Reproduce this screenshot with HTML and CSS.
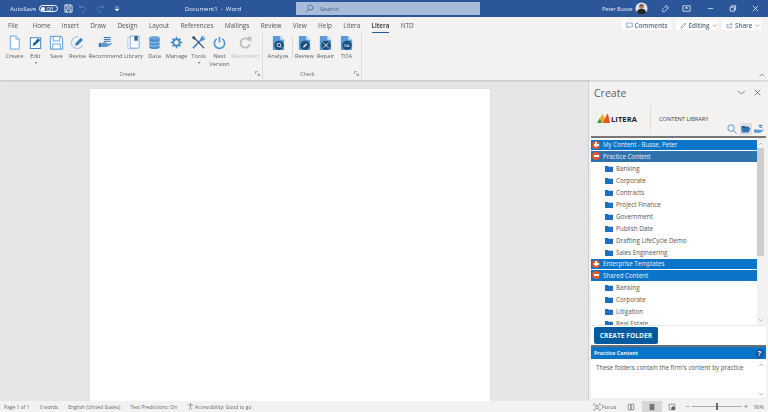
FILE: index.html
```html
<!DOCTYPE html>
<html lang="en">
<head>
<meta charset="utf-8">
<title>Document1 - Word</title>
<link rel="stylesheet" href="styles.css">
</head>
<body>
<div class="app">
  <header class="titlebar">
    <div class="tb-left">
      <span class="autosave">AutoSave</span>
      <span class="toggle"><i></i><b>Off</b></span>
      <svg class="qa save" viewBox="0 0 10 10"><path d="M1 1h7l1 1v7H1zM3 1v2.500h4V1M3 9V5.500h4V9" fill="none" stroke="#fff" stroke-width=".9"/></svg>
      <svg class="qa undo" viewBox="0 0 10 10"><path d="M2 1v3h3M2.300 4A3.300 3.300 0 1 1 4 9" fill="none" stroke="#5f82b8" stroke-width=".9"/></svg>
      <svg class="qa redo" viewBox="0 0 10 10"><path d="M8 1v3H5M7.700 4A3.300 3.300 0 1 0 6 9" fill="none" stroke="#5f82b8" stroke-width=".9"/></svg>
      <svg class="qa more" viewBox="0 0 6 6"><path d="M1 1h4M1 3l2 2 2-2z" fill="#fff" stroke="#fff" stroke-width=".5"/></svg>
      <span class="doctitle">Document1 &nbsp;-&nbsp; Word</span>
    </div>
    <div class="search">
      <svg viewBox="0 0 10 10"><circle cx="6" cy="4" r="2.800" fill="none" stroke="#3f5f90" stroke-width=".8"/><path d="M4 6L1 9" stroke="#3f5f90" stroke-width=".8"/></svg>
      <span>Search</span>
    </div>
    <div class="tb-right">
      <span class="user">Peter Busse</span>
      <svg class="avatar" viewBox="0 0 14 14"><circle cx="7" cy="7" r="6.500" fill="#dfe3e8"/><circle cx="7" cy="5" r="2.600" fill="#a9806a"/><path d="M4.400 4.600C5 2 9 2 9.600 4.600 8 3.600 6 3.600 4.400 4.600z" fill="#3a2c28"/><path d="M1.800 11c1-3 3-3.400 5.200-3.400S11.200 8 12.200 11a6.500 6.500 0 0 1-10.400 0z" fill="#23262c"/></svg>
      <svg class="win pen" viewBox="0 0 10 10"><path d="M2 8.500L1.500 6 6 1.500 8.500 4 4 8.500zM5 2.500L7.500 5" fill="none" stroke="#fff" stroke-width=".7"/></svg>
      <svg class="win ribbonopt" viewBox="0 0 10 10"><path d="M1 2h8v6H1z" fill="none" stroke="#fff" stroke-width=".8"/><path d="M3 5h4L5 3z" fill="#fff"/></svg>
      <svg class="win min" viewBox="0 0 10 10"><path d="M2 5h6" stroke="#fff" stroke-width=".7"/></svg>
      <svg class="win restore" viewBox="0 0 10 10"><path d="M2.500 3.500h4.500v4.500H2.500zM4 3.500V2h4.500v4.500H7" fill="none" stroke="#fff" stroke-width=".8"/></svg>
      <svg class="win close" viewBox="0 0 10 10"><path d="M2 2l6 6M8 2l-6 6" stroke="#fff" stroke-width=".8"/></svg>
    </div>
  </header>

  <section class="ribbon">
    <div class="tabrow">
      <nav class="tabs">
        <span class="t-file">File</span><span>Home</span><span>Insert</span><span>Draw</span><span>Design</span><span>Layout</span><span>References</span><span>Mailings</span><span>Review</span><span>View</span><span>Help</span><span>Litera</span><span class="active">Litera</span><span>NTD</span>
      </nav>
      <div class="actions">
        <span class="act a-comments"><svg viewBox="0 0 10 10"><path d="M1 1.500h8v5.500H4L2.500 8.500V7H1z" fill="none" stroke="#2b579a" stroke-width=".7"/></svg>Comments</span>
        <span class="act a-editing"><svg viewBox="0 0 10 10"><path d="M1.500 8.500L2 6.500 7 1.500 8.500 3 3.500 8z" fill="none" stroke="#2b579a" stroke-width=".7"/></svg>Editing<svg class="caret" viewBox="0 0 6 6"><path d="M1 2l2 2 2-2" fill="none" stroke="#605e5c" stroke-width=".7"/></svg></span>
        <span class="act a-share"><svg viewBox="0 0 10 10"><path d="M1.500 3.500h2M1.500 3.500v5h6.500V6M4 6.500C4 4 6 3 8.500 3M7 1.200L8.800 3 7 4.800" fill="none" stroke="#2b579a" stroke-width=".7"/></svg>Share<svg class="caret" viewBox="0 0 6 6"><path d="M1 2l2 2 2-2" fill="none" stroke="#605e5c" stroke-width=".7"/></svg></span>
      </div>
    </div>
    <div class="commands">
      <div class="group g-create">
        <div class="btns">
          <div class="cmd w21"><svg viewBox="0 0 14 16"><path d="M2.500 1h6L12 4.500V15H2.500z" fill="#fff" stroke="#74ace0" stroke-width="1.100"/><path d="M8.500 1v3.500H12" fill="#e4eff9" stroke="#74ace0" stroke-width=".9"/></svg><span>Create</span></div>
          <div class="cmd w21"><svg viewBox="0 0 14 16"><path d="M1.500 3h11v11.500h-11z" fill="#fff" stroke="#3f88c9" stroke-width="1.100"/><path d="M4 11.500l.6-2.500L10 3.500l2 2L6.500 11z" fill="#1f5a8f"/></svg><span>Edit</span><svg class="drop" viewBox="0 0 6 4"><path d="M1.500 1h3L3 3z" fill="#8a8a8a"/></svg></div>
          <div class="cmd w21"><svg viewBox="0 0 15 16"><path d="M1 1.500h11l2 2v11.500H1z" fill="#fff" stroke="#6aa6dd" stroke-width="1.200"/><path d="M4 1.500v5h7v-5M3.500 15V9.500h8V15" fill="none" stroke="#6aa6dd" stroke-width="1.100"/></svg><span>Save</span></div>
          <div class="cmd w21"><svg viewBox="0 0 15 16"><path d="M13 11A6.300 6.300 0 1 1 8.500 2" fill="none" stroke="#a9cbe9" stroke-width="1.400"/><path d="M4.800 11.500l.7-3L11 3l2.300 2.300L7.800 10.800z" fill="#3f7fb8"/></svg><span>Revise</span></div>
          <div class="cmd w35"><svg viewBox="0 0 18 16"><path d="M1 8.500h3v5H1z" fill="#2e75b6"/><path d="M4 9c3-2 5-1 7-.500 1.500.3 1 1.500-.500 1.500H8c3 .500 5-.500 7-1.500 1.500-.500 2 .7 1 1.500-2.500 2-5 3.500-8 3.500H4z" fill="#5b9bd5"/><path d="M7 2h8M7 4.300h8M7 6.500h8" stroke="#2f6fa9" stroke-width="1.200"/></svg><span>Recommend</span></div>
          <div class="cmd w21"><svg viewBox="0 0 15 16"><path d="M1.500 2.500h9v12h-9z" fill="#fff" stroke="#a9cbe9" stroke-width="1"/><path d="M4 1h9.500v13H4z" fill="#fff" stroke="#74ace0" stroke-width="1"/><path d="M8.500 1h3.500v6L10.200 5.500 8.500 7z" fill="#2a5f91"/></svg><span>Library</span></div>
          <div class="cmd w21"><svg viewBox="0 0 14 16"><path d="M1.500 3v10c0 2.700 11 2.700 11 0V3z" fill="#4a8fcd"/><ellipse cx="7" cy="3" rx="5.500" ry="2" fill="#6aa6dd"/><path d="M1.500 6.500c0 2.500 11 2.500 11 0M1.500 10c0 2.500 11 2.500 11 0" fill="none" stroke="#cfe2f3" stroke-width=".8"/></svg><span>Data</span></div>
          <div class="cmd w23"><svg class="gear" viewBox="0 0 16 16"><circle cx="8" cy="8" r="4" fill="none" stroke="#3f88c9" stroke-width="2.200"/><path d="M8 1v2.500M8 12.500V15M1 8h2.500M12.500 8H15M3 3l1.800 1.800M11.200 11.200L13 13M13 3l-1.800 1.800M4.800 11.200L3 13" stroke="#3f88c9" stroke-width="1.800"/></svg><span>Manage</span></div>
          <div class="cmd w21 tools"><svg viewBox="0 0 16 16"><path d="M2 14L12 4" stroke="#3f88c9" stroke-width="1.600"/><path d="M10.500 5.500A3 3 0 0 1 14 1.200L12.300 3 13.300 4 15 2.200a3 3 0 0 1-4.500 3.300z" fill="#3f88c9"/><path d="M2 1.500L14 14" stroke="#2a4a70" stroke-width="1.300"/><path d="M1 3l2-2 2 2.500-1.500 1.500z" fill="#2a4a70"/></svg><span>Tools</span><svg class="drop" viewBox="0 0 6 4"><path d="M1.500 1h3L3 3z" fill="#8a8a8a"/></svg></div>
          <div class="cmd w21"><svg viewBox="0 0 14 16"><path d="M4 4.200a5.500 5.500 0 1 0 6 0" fill="none" stroke="#4a96d8" stroke-width="1.700"/><path d="M7 2v6" stroke="#4a96d8" stroke-width="1.700"/></svg><span>Next<br>Version</span></div>
          <div class="cmd w31 dim"><svg viewBox="0 0 15 16"><path d="M11.500 6A5 5 0 1 0 12 10" fill="none" stroke="#bdbdbd" stroke-width="2"/><path d="M9 1.500L14 2l-.5 5.500z" fill="#bdbdbd"/></svg><span>Reconnect</span></div>
        </div>
        <div class="glabel"><span>Create</span><svg viewBox="0 0 6 6"><path d="M.5.500h3M.5.500v3M5.500 5.500L2.500 2.500M5.500 3v2.500H3" fill="none" stroke="#605e5c" stroke-width=".6"/></svg></div>
      </div>
      <div class="group g-check">
        <div class="btns">
          <div class="cmd w26 chk"><svg viewBox="0 0 14 17"><path d="M1 1h8l4 4v11H1z" fill="#5b9bd5"/><path d="M9 1v4h4z" fill="#dbe8f5"/><circle cx="7.500" cy="11" r="5" fill="#1f4e79"/><circle cx="7.500" cy="10.700" r="2" fill="none" stroke="#fff" stroke-width=".8"/><path d="M9 12.300l1.500 1.500" stroke="#fff" stroke-width=".8"/></svg><span>Analyze</span></div>
          <i class="vsep"></i>
          <div class="cmd w21 chk"><svg viewBox="0 0 14 17"><path d="M1 1h8l4 4v11H1z" fill="#5b9bd5"/><path d="M9 1v4h4z" fill="#dbe8f5"/><circle cx="7.500" cy="11" r="5" fill="#1f4e79"/><path d="M5.500 13.200l.3-1.300 3-3 1 1-3 3z" fill="#fff"/></svg><span>Review</span></div>
          <div class="cmd w21 chk"><svg viewBox="0 0 14 17"><path d="M1 1h8l4 4v11H1z" fill="#5b9bd5"/><path d="M9 1v4h4z" fill="#dbe8f5"/><circle cx="7.500" cy="11" r="5" fill="#1f4e79"/><path d="M5 8.500l5 5M10 8.500l-5 5" stroke="#fff" stroke-width=".9"/></svg><span>Repair</span></div>
          <div class="cmd w21 chk"><svg viewBox="0 0 14 17"><path d="M1 1h8l4 4v11H1z" fill="#5b9bd5"/><path d="M9 1v4h4z" fill="#dbe8f5"/><circle cx="7.500" cy="11" r="5" fill="#1f4e79"/><text x="7.500" y="12.600" text-anchor="middle" class="ba">BA</text></svg><span>TOA</span></div>
        </div>
        <div class="glabel"><span>Check</span><svg viewBox="0 0 6 6"><path d="M.5.500h3M.5.500v3M5.500 5.500L2.500 2.500M5.500 3v2.500H3" fill="none" stroke="#605e5c" stroke-width=".6"/></svg></div>
      </div>
      <svg class="collapse" viewBox="0 0 6 4"><path d="M.5 3.500L3 1l2.500 2.500" fill="none" stroke="#605e5c" stroke-width=".6"/></svg>
    </div>
  </section>

  <main class="main">
    <div class="docarea"><div class="page"></div></div>
    <aside class="pane">
      <div class="pane-head">
        <span>Create</span>
        <svg viewBox="0 0 8 8" class="chev"><path d="M1 2.500l3 3 3-3" fill="none" stroke="#605e5c" stroke-width=".7"/></svg>
        <svg viewBox="0 0 8 8" class="x"><path d="M1.500 1.500l5 5M6.500 1.500l-5 5" stroke="#605e5c" stroke-width=".7"/></svg>
      </div>
      <div class="brand">
        <div class="logo">
          <svg viewBox="0 0 13 9"><path d="M0 9L3 4l2 5z" fill="#3b9a3f"/><path d="M3 4l2.500-4L8 4.500 6 9H5z" fill="#f5a71c"/><path d="M6 9l2-4.500L10 0h1l2 9z" fill="#e2571e"/></svg>
          <b>LITERA</b>
        </div>
        <i class="bsep"></i>
        <span class="cl">CONTENT LIBRARY</span>
        <div class="ptools">
          <svg viewBox="0 0 11 11"><circle cx="4.500" cy="4.500" r="3.600" fill="none" stroke="#2e75b6" stroke-width=".8"/><path d="M7 7l3.500 3.500" stroke="#2e75b6" stroke-width=".9"/></svg>
          <span class="on"><svg viewBox="0 0 11 9"><path d="M.5 8V1h3.500l1 1h4v1.500H3L.5 8z" fill="#1f5f9e"/><path d="M.5 8.500L3 3.500h7.500L8.500 8.500z" fill="#2e75b6"/></svg></span>
          <svg viewBox="0 0 11 11"><path d="M.5 6h2v3.500h-2z" fill="#2e75b6"/><path d="M2.500 6.500c2-1 4 .5 5 0l3-.5c.5.500-2 3-3.500 3.500H2.500z" fill="#5b9bd5"/><path d="M5 1.500h4M6 3.500h3" stroke="#1f5f9e" stroke-width="1"/></svg>
        </div>
      </div>
      <div class="listwrap">
        <div class="list">
          <div class="hrow"><i class="ic plus"></i>My Content - Busse, Peter</div>
          <div class="hrow sel"><i class="ic minus"></i>Practice Content</div>
          <div class="item"><svg viewBox="0 0 8 6"><path d="M0 6V0h3l.6.8H8V6z" fill="#1f6fc0"/></svg>Banking</div>
          <div class="item"><svg viewBox="0 0 8 6"><path d="M0 6V0h3l.6.8H8V6z" fill="#1f6fc0"/></svg>Corporate</div>
          <div class="item"><svg viewBox="0 0 8 6"><path d="M0 6V0h3l.6.8H8V6z" fill="#1f6fc0"/></svg>Contracts</div>
          <div class="item"><svg viewBox="0 0 8 6"><path d="M0 6V0h3l.6.8H8V6z" fill="#1f6fc0"/></svg>Project Finance</div>
          <div class="item"><svg viewBox="0 0 8 6"><path d="M0 6V0h3l.6.8H8V6z" fill="#1f6fc0"/></svg>Government</div>
          <div class="item"><svg viewBox="0 0 8 6"><path d="M0 6V0h3l.6.8H8V6z" fill="#1f6fc0"/></svg>Publish Date</div>
          <div class="item"><svg viewBox="0 0 8 6"><path d="M0 6V0h3l.6.8H8V6z" fill="#1f6fc0"/></svg>Drafting LifeCycle Demo</div>
          <div class="item"><svg viewBox="0 0 8 6"><path d="M0 6V0h3l.6.8H8V6z" fill="#1f6fc0"/></svg>Sales Engineering</div>
          <div class="hrow"><i class="ic plus"></i>Enterprise Templates</div>
          <div class="hrow"><i class="ic minus"></i>Shared Content</div>
          <div class="item"><svg viewBox="0 0 8 6"><path d="M0 6V0h3l.6.8H8V6z" fill="#1f6fc0"/></svg>Banking</div>
          <div class="item"><svg viewBox="0 0 8 6"><path d="M0 6V0h3l.6.8H8V6z" fill="#1f6fc0"/></svg>Corporate</div>
          <div class="item"><svg viewBox="0 0 8 6"><path d="M0 6V0h3l.6.8H8V6z" fill="#1f6fc0"/></svg>Litigation</div>
          <div class="item last"><svg viewBox="0 0 8 6"><path d="M0 6V0h3l.6.8H8V6z" fill="#1f6fc0"/></svg>Real Estate</div>
        </div>
        <div class="sbar">
          <svg class="ar" viewBox="0 0 8 6"><path d="M2 4l2-2 2 2" fill="none" stroke="#a6a6a6" stroke-width=".7"/></svg>
          <i class="thumb"></i>
          <svg class="ar end" viewBox="0 0 8 6"><path d="M2 2l2 2 2-2" fill="none" stroke="#a6a6a6" stroke-width=".7"/></svg>
        </div>
      </div>
      <div class="btnrow"><button class="newfolder">CREATE FOLDER</button></div>
      <div class="info-head"><span>Practice Content</span><i>?</i></div>
      <div class="info-body">
        <p>These folders contain the firm's content by practice</p>
        <div class="sbar2">
          <svg viewBox="0 0 8 6"><path d="M2 4l2-2 2 2" fill="none" stroke="#a6a6a6" stroke-width=".7"/></svg>
          <svg viewBox="0 0 8 6"><path d="M2 2l2 2 2-2" fill="none" stroke="#a6a6a6" stroke-width=".7"/></svg>
        </div>
      </div>
    </aside>
  </main>

  <footer class="status">
    <div class="st-left">
      <span>Page 1 of 1</span><span>0 words</span><span>English (United States)</span><span>Text Predictions: On</span>
      <span class="acc"><svg viewBox="0 0 10 10"><path d="M5 .5a1 1 0 1 1 0 2 1 1 0 0 1 0-2zM1 3h8M5 3v3M5 6L3 9.500M5 6l2 3.500" fill="none" stroke="#605e5c" stroke-width=".7"/></svg>Accessibility: Good to go</span>
    </div>
    <div class="st-right">
      <span class="focus"><svg viewBox="0 0 10 10"><path d="M1 3V1h2M7 1h2v2M1 7v2h2M7 9h2V7M3.500 3h3v4h-3z" fill="none" stroke="#605e5c" stroke-width=".7"/></svg>Focus</span>
      <span class="view v-read"><svg viewBox="0 0 10 10"><path d="M1.500 1.500h3.200v7H1.500zM5.300 1.500h3.200v7H5.300z" fill="none" stroke="#666" stroke-width=".8"/></svg></span>
      <span class="view v-print on"><svg viewBox="0 0 10 10"><path d="M2 1h6v8H2z" fill="#777"/></svg></span>
      <span class="view v-web"><svg viewBox="0 0 10 10"><path d="M1.500 1.500h7v7h-7z" fill="none" stroke="#666" stroke-width=".8"/><circle cx="6.500" cy="6.500" r="2.500" fill="#666"/></svg></span>
      <span class="zoomctl">
        <span class="zm">&minus;</span>
        <span class="slider"><i></i></span>
        <span class="zm">+</span>
      </span>
      <span class="pct">90%</span>
    </div>
  </footer>
</div>
</body>
</html>
```

FILE: styles.css
```css
* { box-sizing: border-box; }
html, body { margin: 0; padding: 0; }
body { width: 768px; height: 412px; overflow: hidden; font-family: "Open Sans", "Noto Sans", sans-serif; color: #444; background: #e6e6e6; }
svg { display: block; }
.app { width: 768px; height: 412px; display: flex; flex-direction: column; filter: blur(.3px); }

/* title bar */
.titlebar { height: 17px; flex: none; background: #2b579a; color: #fff; display: flex; font-size: 6px; }
.tb-left { width: 296px; flex: none; display: flex; align-items: center; padding-left: 10px; position: relative; }
.autosave { width: 29px; color: #e6ecf5; }
.toggle { width: 19px; height: 7px; border: 1px solid #fff; border-radius: 4px; display: flex; align-items: center; gap: 1.500px; padding-left: 1px; font-size: 4.500px; }
.toggle i { width: 4px; height: 4px; background: #fff; border-radius: 50%; }
.toggle b { font-weight: 400; }
.qa { width: 9px; height: 9px; }
.save { margin-left: 6px; }
.undo { margin-left: 5px; }
.redo { margin-left: 9px; }
.more { width: 6px; height: 6px; margin-left: 9px; }
.doctitle { margin-left: 65px; color: #eef2f8; white-space: nowrap; }
.search { width: 184px; height: 13px; margin-top: 2px; background: #a8bbd8; display: flex; align-items: center; padding-left: 9px; gap: 6px; color: #3f5f90; font-size: 6px; }
.search svg { width: 9px; height: 9px; }
.tb-right { flex: 1; display: flex; align-items: center; padding-left: 122px; }
.user { width: 33px; color: #e6ecf5; font-size: 5.500px; white-space: nowrap; }
.avatar { width: 13px; height: 13px; }
.win { width: 9px; height: 9px; }
.pen { margin-left: 13px; }
.ribbonopt { margin-left: 12px; }
.min { margin-left: 15px; }
.restore { margin-left: 13px; }
.close { margin-left: 14px; }

/* ribbon */
.ribbon { height: 63px; flex: none; background: #f3f2f1; box-shadow: 0 1px 2px rgba(0,0,0,.16); position: relative; z-index: 2; }
.tabrow { height: 16px; display: flex; justify-content: space-between; align-items: flex-start; }
.tabs { display: flex; gap: 11.300px; padding: 3px 0 0 8px; font-size: 6.400px; color: #555; }
.tabs span { line-height: 12px; height: 13px; }
.tabs .t-file { margin-right: 3px; }
.tabs .active { color: #333; font-weight: 600; border-bottom: 1px solid #2b579a; }
.actions { display: flex; gap: 5px; padding: 3px 7px 0 0; }
.act { height: 10px; background: #fff; display: flex; align-items: center; gap: 1.500px; padding-left: 4px; font-size: 6.300px; font-weight: 600; color: #5a6a80; white-space: nowrap; }
.act svg { width: 7px; height: 7px; }
.act .caret { width: 5px; height: 5px; margin-left: 1px; }
.a-comments { width: 49px; }
.a-editing { width: 41px; }
.a-share { width: 39px; gap: 2px; }

.commands { height: 47px; display: flex; padding-left: 4px; position: relative; }
.group { display: flex; flex-direction: column; border-right: 1px solid #dcdbd9; height: 46px; }
.g-create { width: 259px; }
.g-check { width: 99px; padding-left: 2px; }
.btns { height: 37px; display: flex; }
.cmd { display: flex; flex-direction: column; align-items: center; font-size: 5.800px; line-height: 8px; color: #606060; padding-top: 2px; text-align: center; white-space: nowrap; }
.cmd > svg:first-child { width: 15px; height: 15px; margin-bottom: 2px; }
.cmd > svg.gear:first-child { width: 13px; height: 13px; margin: 1px 0 3px; }
.cmd .drop { width: 6px; height: 4px; margin-top: 1px; }
.chk > svg:first-child { height: 16px; margin-bottom: 1px; }
.w21 { width: 21px; }
.w23 { width: 23px; }
.w26 { width: 26px; }
.w31 { width: 31px; }
.w35 { width: 35px; }
.dim { color: #bdbdbd; }
.vsep { width: 1px; height: 22px; margin: 3px 1px 0; background: #dcdbd9; }
.ba { font-family: "Open Sans", sans-serif; font-size: 4.500px; fill: #dbe8f5; }
.glabel { position: relative; text-align: center; font-size: 5.200px; color: #666; line-height: 8px; padding-right: 11px; }
.glabel svg { position: absolute; right: 2px; top: 1px; width: 5px; height: 5px; }
.collapse { position: absolute; right: 3px; bottom: 3px; width: 6px; height: 4px; }

/* main */
.main { flex: 1; min-height: 0; display: flex; }
.docarea { width: 588px; flex: none; background: #e6e6e6; padding: 9px 0 0 90px; overflow: hidden; }
.page { width: 400px; height: 330px; background: #fff; box-shadow: 0 0 1px #c8c8c8; }
.pane { flex: 1; background: #f3f2f1; border-left: 1px solid #cfcfcf; padding: 0 2px 3px 2px; display: flex; flex-direction: column; }
.pane-head { height: 21px; flex: none; display: flex; align-items: center; padding: 4px 4px 0 3px; font-size: 10.500px; color: #5f5f5f; }
.pane-head span { flex: 1; }
.chev, .x { width: 9px; height: 9px; }
.x { margin-left: 7px; }
.brand { height: 35px; flex: none; display: flex; align-items: center; position: relative; }
.logo { width: 59px; display: flex; align-items: center; gap: 1px; padding-left: 6px; font-size: 7.500px; color: #222; }
.logo svg { width: 13px; height: 9px; }
.logo b { letter-spacing: .1px; }
.bsep { width: 1px; height: 28px; background: #e2e1e0; margin-right: 8px; }
.cl { font-size: 5.700px; color: #444; white-space: nowrap; }
.ptools { position: absolute; right: 2px; bottom: 1px; display: flex; align-items: center; gap: 2.500px; }
.ptools > svg { width: 10px; height: 10px; }
.ptools .on { width: 12px; height: 12px; background: #dedede; display: flex; align-items: center; justify-content: center; }
.ptools .on svg { width: 10px; height: 8px; }

.listwrap { height: 189px; flex: none; display: flex; border-top: 2px solid #777; background: #fff; }
.list { flex: 1; overflow: hidden; padding-top: 1.500px; }
.hrow { height: 11.500px; background: #0a74c9; color: #e8f3fc; font-size: 6.200px; display: flex; align-items: center; white-space: nowrap; border-bottom: .5px solid #fff; }
.hrow.sel { background: #2f72ad; }
.ic { width: 8px; height: 8px; border-radius: 50%; background: #e2572b; margin: 0 3px 0 1px; position: relative; flex: none; }
.ic::before { content: ""; position: absolute; left: 1.500px; right: 1.500px; top: 3.200px; height: 1.600px; background: #fff; }
.plus::after { content: ""; position: absolute; top: 1.500px; bottom: 1.500px; left: 3.200px; width: 1.600px; background: #fff; }
.item { height: 12px; display: flex; align-items: center; padding-left: 14px; gap: 3px; font-size: 6.300px; color: #555; white-space: nowrap; }
.item svg { width: 8px; height: 6px; }
.sbar { width: 9px; flex: none; background: #f3f2f1; display: flex; flex-direction: column; }
.sbar .ar { width: 8px; height: 6px; margin-top: 3px; }
.thumb { display: block; width: 7px; height: 108px; margin: 1px 0 0 0; background: #cdcdcd; }
.sbar .end { margin-top: auto; margin-bottom: 2px; }

.btnrow { height: 20px; flex: none; background: #fff; padding: 1px 0 0 3px; border-top: 1px solid #e8e8e8; }
.newfolder { display: block; width: 64px; height: 17px; padding: 0; border: 0; border-radius: 2px; background: #005a9e; color: #e8f1f8; font-family: inherit; font-size: 6.700px; font-weight: 700; }
.info-head { height: 14px; flex: none; border-top: 2px solid #6e6e6e; background: #0a74c9; color: #e8f3fc; display: flex; align-items: center; justify-content: space-between; padding: 0 2px 0 3px; font-size: 5.300px; font-weight: 700; }
.info-head i { width: 9px; height: 9px; border-radius: 50%; background: #0d5a9e; font-style: normal; font-size: 7px; text-align: center; line-height: 9px; color: #fff; }
.info-body { flex: 1; background: #fff; display: flex; justify-content: space-between; padding: 3px 1px 1px 5px; }
.info-body p { margin: 0; font-size: 6.200px; line-height: 12px; color: #555; white-space: nowrap; }
.sbar2 { display: flex; flex-direction: column; justify-content: space-between; }
.sbar2 svg { width: 8px; height: 6px; }

/* status */
.status { height: 11px; flex: none; background: #f3f2f1; display: flex; justify-content: space-between; font-size: 5px; color: #666; line-height: 12px; }
.st-left { display: flex; gap: 10px; padding-left: 4px; white-space: nowrap; }
.acc { display: flex; align-items: center; gap: 1px; }
.acc svg { width: 7px; height: 7px; }
.st-right { display: flex; align-items: center; white-space: nowrap; }
.focus { display: flex; align-items: center; gap: 1px; width: 28px; font-size: 5.300px; }
.focus svg { width: 8px; height: 8px; }
.view { width: 20px; height: 11px; display: flex; align-items: center; justify-content: center; }
.view svg { width: 8px; height: 8px; }
.view.on { background: #d8d7d6; }
.v-read { margin-right: 1px; }
.zoomctl { display: flex; align-items: center; gap: 2px; margin-left: 4px; width: 65px; }
.zm { font-size: 7px; }
.slider { width: 50px; height: 1px; background: #aaa; position: relative; display: block; }
.slider i { position: absolute; left: 24px; top: -3px; width: 2px; height: 7px; background: #666; }
.pct { width: 14px; margin-left: 3px; }
```
